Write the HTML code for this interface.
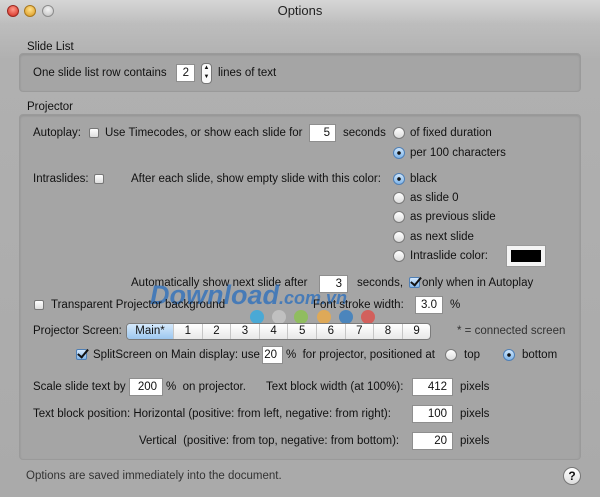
<!DOCTYPE html>
<html><head><meta charset="utf-8"><style>
*{box-sizing:border-box;margin:0;padding:0}
body{width:600px;height:497px;overflow:hidden;background:#ababab;font-family:"Liberation Sans",sans-serif;font-size:11.5px;color:#111;position:relative}
.win{position:absolute;left:0;top:0;width:600px;height:497px;background:linear-gradient(#d6d6d6 0,#bdbdbd 24px,#b0b0b0 60px,#aaaaaa 497px)}
.t{position:absolute;white-space:nowrap;line-height:14px}
.box{position:absolute;border:1px solid #9a9a9a;border-radius:4px;background:#a5a5a5;box-shadow:inset 0 1px 2px rgba(0,0,0,.12)}
.in{position:absolute;background:#fff;border:1px solid #8e8e8e;text-align:right;padding-right:5px;line-height:16px;font-size:11.5px}
.cb{position:absolute;width:10px;height:10px;background:linear-gradient(#fff,#ddd);border:1px solid #777;border-radius:2px}
.rd{position:absolute;width:12px;height:12px;border-radius:50%;background:linear-gradient(#fff,#dcdcdc);border:1px solid #7a7a7a}
.rd.on{background:radial-gradient(circle,#111 0 1.6px,transparent 2px),linear-gradient(#cfe6fb,#7fb5ea);border-color:#4f7fb5}
.chk{position:absolute;width:11px;height:11px;background:linear-gradient(#d6e9fc,#84b7ea);border:1px solid #4f7fb5;border-radius:2px}
.chk:after{content:"";position:absolute;left:3px;top:-3px;width:4px;height:9px;border:solid #111;border-width:0 2px 2px 0;transform:rotate(40deg)}
.seg{position:absolute;left:126px;top:323px;width:305px;height:17px;border:1px solid #7c7c7c;border-radius:4px;background:linear-gradient(#fff,#e8e8e8);display:flex;overflow:hidden}
.seg div{flex:0 0 28.6px;text-align:center;line-height:15px;border-left:1px solid #c6c6c6;font-size:11.5px}
.seg div.m{flex:0 0 46px;border-left:none;background:linear-gradient(#d6eafc,#9dc7ef)}
.dot{position:absolute;top:310px;width:14px;height:14px;border-radius:50%;opacity:.85}
</style></head><body><div class="win">
<div style="position:absolute;left:7px;top:5px;width:12px;height:12px;border-radius:50%;background:radial-gradient(circle at 50% 35%,#ff9a8a,#d2261c);border:1px solid #9a2a22"></div>
<div style="position:absolute;left:24px;top:5px;width:12px;height:12px;border-radius:50%;background:radial-gradient(circle at 50% 35%,#ffe08a,#d9961c);border:1px solid #a8781e"></div>
<div style="position:absolute;left:42px;top:5px;width:12px;height:12px;border-radius:50%;background:radial-gradient(circle at 50% 35%,#f4f4f4,#bdbdbd);border:1px solid #8c8c8c"></div>
<div class="t" style="left:0;width:600px;text-align:center;top:4px;font-size:13px;color:#222">Options</div>

<div class="t" style="left:27px;top:40px">Slide List</div>
<div class="box" style="left:19px;top:53px;width:562px;height:39px"></div>
<div class="t" style="left:33px;top:66px">One slide list row contains</div>
<div class="in" style="left:176px;top:64px;width:19px;height:18px">2</div>
<div style="position:absolute;left:201px;top:63px;width:11px;height:21px;border:1px solid #777;border-radius:4px;background:#fafafa;font-size:6px;text-align:center;line-height:9px">▲<br>▼</div>
<div class="t" style="left:218px;top:66px">lines of text</div>

<div class="t" style="left:27px;top:100px">Projector</div>
<div class="box" style="left:19px;top:114px;width:562px;height:346px"></div>

<div class="t" style="left:33px;top:126px">Autoplay:</div>
<div class="cb" style="left:89px;top:128px"></div>
<div class="t" style="left:105px;top:126px">Use Timecodes, or show each slide for</div>
<div class="in" style="left:309px;top:124px;width:27px;height:18px">5</div>
<div class="t" style="left:343px;top:126px">seconds</div>
<div class="rd" style="left:393px;top:127px"></div><div class="t" style="left:410px;top:126px">of fixed duration</div>
<div class="rd on" style="left:393px;top:147px"></div><div class="t" style="left:410px;top:146px">per 100 characters</div>

<div class="t" style="left:33px;top:172px">Intraslides:</div>
<div class="cb" style="left:94px;top:174px"></div>
<div class="t" style="left:131px;top:172px">After each slide, show empty slide with this color:</div>
<div class="rd on" style="left:393px;top:173px"></div><div class="t" style="left:410px;top:172px">black</div>
<div class="rd" style="left:393px;top:192px"></div><div class="t" style="left:410px;top:191px">as slide 0</div>
<div class="rd" style="left:393px;top:211px"></div><div class="t" style="left:410px;top:210px">as previous slide</div>
<div class="rd" style="left:393px;top:231px"></div><div class="t" style="left:410px;top:230px">as next slide</div>
<div class="rd" style="left:393px;top:250px"></div><div class="t" style="left:410px;top:249px">Intraslide color:</div>
<div style="position:absolute;left:506px;top:245px;width:40px;height:22px;background:#f4f4f4;border:1px solid #999;padding:4px"><div style="width:100%;height:100%;background:#000"></div></div>

<div class="t" style="left:131px;top:276px">Automatically show next slide after</div>
<div class="in" style="left:319px;top:275px;width:29px;height:18px">3</div>
<div class="t" style="left:357px;top:276px">seconds,</div>
<div class="chk" style="left:409px;top:277px"></div>
<div class="t" style="left:422px;top:276px">only when in Autoplay</div>

<div class="t" style="left:150px;top:280px;font-size:27px;line-height:30px;font-weight:bold;font-style:italic;color:rgba(40,110,190,.75)">Download<span style="font-size:18px">.com.vn</span></div>

<div class="cb" style="left:34px;top:300px"></div>
<div class="t" style="left:51px;top:298px">Transparent Projector background</div>
<div class="t" style="left:313px;top:298px">Font stroke width:</div>
<div class="in" style="left:415px;top:296px;width:28px;height:18px">3.0</div>
<div class="t" style="left:450px;top:298px">%</div>

<div class="dot" style="left:250px;background:#3aa9dd"></div>
<div class="dot" style="left:272px;background:#c4c4c4"></div>
<div class="dot" style="left:294px;background:#8cc152"></div>
<div class="dot" style="left:317px;background:#e8a94a"></div>
<div class="dot" style="left:339px;background:#3b7fbf"></div>
<div class="dot" style="left:361px;background:#d9534f"></div>

<div class="t" style="left:33px;top:324px">Projector Screen:</div>
<div class="seg"><div class="m">Main*</div><div>1</div><div>2</div><div>3</div><div>4</div><div>5</div><div>6</div><div>7</div><div>8</div><div>9</div></div>
<div class="t" style="left:457px;top:324px;color:#333">* = connected screen</div>

<div class="chk" style="left:76px;top:349px"></div>
<div class="t" style="left:93px;top:348px">SplitScreen on Main display: use</div>
<div class="in" style="left:262px;top:346px;width:21px;height:18px">20</div>
<div class="t" style="left:286px;top:348px">%&nbsp; for projector, positioned at</div>
<div class="rd" style="left:445px;top:349px"></div><div class="t" style="left:464px;top:348px">top</div>
<div class="rd on" style="left:503px;top:349px"></div><div class="t" style="left:522px;top:348px">bottom</div>

<div class="t" style="left:33px;top:380px">Scale slide text by</div>
<div class="in" style="left:129px;top:378px;width:34px;height:18px">200</div>
<div class="t" style="left:166px;top:380px">%&nbsp; on projector.</div>
<div class="t" style="left:266px;top:380px">Text block width (at 100%):</div>
<div class="in" style="left:412px;top:378px;width:41px;height:18px">412</div>
<div class="t" style="left:460px;top:380px">pixels</div>

<div class="t" style="left:33px;top:407px">Text block position: Horizontal (positive: from left, negative: from right):</div>
<div class="in" style="left:412px;top:405px;width:41px;height:18px">100</div>
<div class="t" style="left:460px;top:407px">pixels</div>

<div class="t" style="left:139px;top:434px">Vertical&nbsp; (positive: from top, negative: from bottom):</div>
<div class="in" style="left:412px;top:432px;width:41px;height:18px">20</div>
<div class="t" style="left:460px;top:434px">pixels</div>

<div class="t" style="left:26px;top:469px;color:#333">Options are saved immediately into the document.</div>
<div style="position:absolute;left:563px;top:467px;width:18px;height:18px;border-radius:50%;background:linear-gradient(#fff,#ddd);border:1px solid #777;text-align:center;font-weight:bold;font-size:12px;line-height:16px">?</div>
</div></body></html>
